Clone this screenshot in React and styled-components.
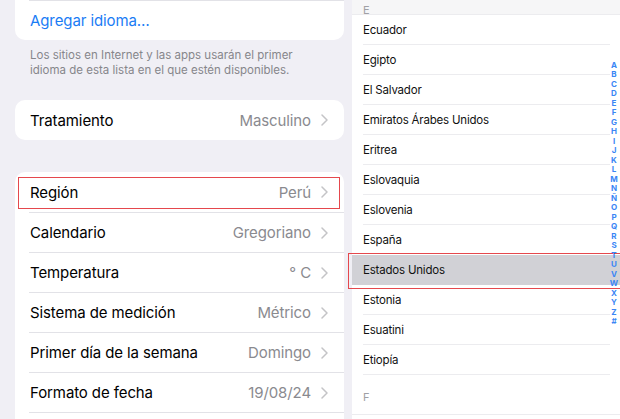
import React from "react";
import styled, { createGlobalStyle } from "styled-components";

const Global = createGlobalStyle`
  html, body { margin: 0; padding: 0; }
  body {
    background: #f0eff5;
    font-family: Inter, "Noto Sans", "Liberation Sans", sans-serif;
    -webkit-font-smoothing: antialiased;
  }
`;

const Screen = styled.div`
  display: grid;
  grid-template-columns: 352px 1fr;
  width: 620px;
  height: 419px;
  overflow: hidden;
  position: relative;
`;

const LeftPane = styled.div`
  padding: 0 8px 0 15px;
  display: flex;
  flex-direction: column;
`;

const Card = styled.div`
  background: #fff;
  border-radius: ${(p) => (p.$openTop ? "0 0 10px 10px" : p.$openBottom ? "10px 10px 0 0" : "10px")};
  margin-top: ${(p) => p.$mt || 0}px;
  display: flex;
  flex-direction: column;
`;

const Row = styled.div`
  position: relative;
  height: ${(p) => p.$h || 40}px;
  display: flex;
  align-items: center;
  padding: 0 16px 0 15px;
  font-size: 15px;
  color: #000;
  letter-spacing: -0.1px;
`;

const SepRow = styled.div`
  margin-left: 14px;
  border-top: 1px solid #e2e2e7;
`;

const Label = styled.span`
  flex: 1;
  color: ${(p) => (p.$link ? "#1a7cf5" : "#000")};
`;

const Value = styled.span`
  color: #8a8a8f;
  margin-right: 10px;
`;

const Footer = styled.div`
  padding: 8px 15px 0 15px;
  font-size: 11.5px;
  line-height: 15px;
  color: #86868b;
`;

const Highlight = styled.div`
  position: absolute;
  z-index: 2;
  left: ${(p) => p.$l}px;
  right: ${(p) => p.$r}px;
  top: ${(p) => p.$t}px;
  bottom: ${(p) => p.$b}px;
  border: 1.5px solid #e5484d;
  pointer-events: none;
`;

const Chevron = () => (
  <svg width="7" height="12" viewBox="0 0 7 12" fill="none">
    <polyline points="1,1 6,6 1,11" stroke="#c4c4c7" strokeWidth="1.5" strokeLinecap="round" strokeLinejoin="round" />
  </svg>
);

const RightPane = styled.div`
  background: #fff;
  position: relative;
  display: flex;
  flex-direction: column;
`;

const SectionHead = styled.div`
  height: ${(p) => p.$h}px;
  flex: none;
  background: ${(p) => p.$bg || "#fff"};
  display: flex;
  align-items: flex-end;
  padding-left: 11px;
  font-size: 11px;
  color: #a0a0a5;
  overflow: hidden;
  box-sizing: border-box;
  border-bottom: 1px solid #ececef;
  line-height: ${(p) => p.$lh || 14}px;
`;

const ListRow = styled.div`
  position: relative;
  height: 30px;
  flex: none;
  display: flex;
  align-items: center;
  background: ${(p) => (p.$active ? "#d1d1d6" : "#fff")};
`;

const ListText = styled.div`
  flex: 1;
  height: 100%;
  margin-left: 11px;
  margin-right: 10px;
  display: flex;
  align-items: center;
  font-size: 11.5px;
  letter-spacing: -0.2px;
  color: #111;
  box-sizing: border-box;
  border-bottom: 1px solid ${(p) => (p.$noSep ? "transparent" : "#ececef")};
`;

const IndexBar = styled.div`
  position: absolute;
  z-index: 3;
  right: 0;
  top: 61px;
  width: 12px;
  display: flex;
  flex-direction: column;
  align-items: center;
  font-size: 8px;
  font-weight: 700;
  line-height: 9.48px;
  color: #3a86f5;
`;

const letters = "ABCDEFGHIJKLMNÑOPQRSTUVWXYZ#".split("");

const countries = [
  "Ecuador",
  "Egipto",
  "El Salvador",
  "Emiratos Árabes Unidos",
  "Eritrea",
  "Eslovaquia",
  "Eslovenia",
  "España",
  "Estados Unidos",
  "Estonia",
  "Esuatini",
  "Etiopía",
];

const settings = [
  ["Región", "Perú", true],
  ["Calendario", "Gregoriano"],
  ["Temperatura", "° C"],
  ["Sistema de medición", "Métrico"],
  ["Primer día de la semana", "Domingo"],
  ["Formato de fecha", "19/08/24"],
];

export default function App() {
  return (
    <>
      <Global />
      <Screen>
        <LeftPane>
          <Card $openTop>
            <SepRow />
            <Row $h={39}>
              <Label $link>Agregar idioma…</Label>
            </Row>
          </Card>
          <Footer>
            Los sitios en Internet y las apps usarán el primer
            <br />
            idioma de esta lista en el que estén disponibles.
          </Footer>
          <Card $mt={22}>
            <Row>
              <Label>Tratamiento</Label>
              <Value>Masculino</Value>
              <Chevron />
            </Row>
          </Card>
          <Card $mt={32} $openBottom>
            {settings.map(([l, v, hl], i) => (
              <React.Fragment key={l}>
                {i > 0 && <SepRow />}
                <Row $h={i > 0 ? 39 : 40}>
                  <Label>{l}</Label>
                  <Value>{v}</Value>
                  <Chevron />
                  {hl && <Highlight $l={3} $r={4} $t={5} $b={3} />}
                </Row>
              </React.Fragment>
            ))}
            <SepRow />
            <Row $h={39} />
          </Card>
        </LeftPane>
        <RightPane>
          <SectionHead $h={15} $bg="#f6f6f7" $lh={8}>E</SectionHead>
          {countries.map((c, i) => {
            const active = c === "Estados Unidos";
            return (
              <ListRow key={c} $active={active}>
                <ListText $noSep={active || countries[i + 1] === "Estados Unidos"}>{c}</ListText>
                {active && <Highlight $l={-4} $r={-4} $t={-2} $b={-4} />}
              </ListRow>
            );
          })}
          <SectionHead $h={40} $lh={34}>F</SectionHead>
          <ListRow />
          <IndexBar>
            {letters.map((l) => (
              <span key={l}>{l}</span>
            ))}
          </IndexBar>
        </RightPane>
      </Screen>
    </>
  );
}
